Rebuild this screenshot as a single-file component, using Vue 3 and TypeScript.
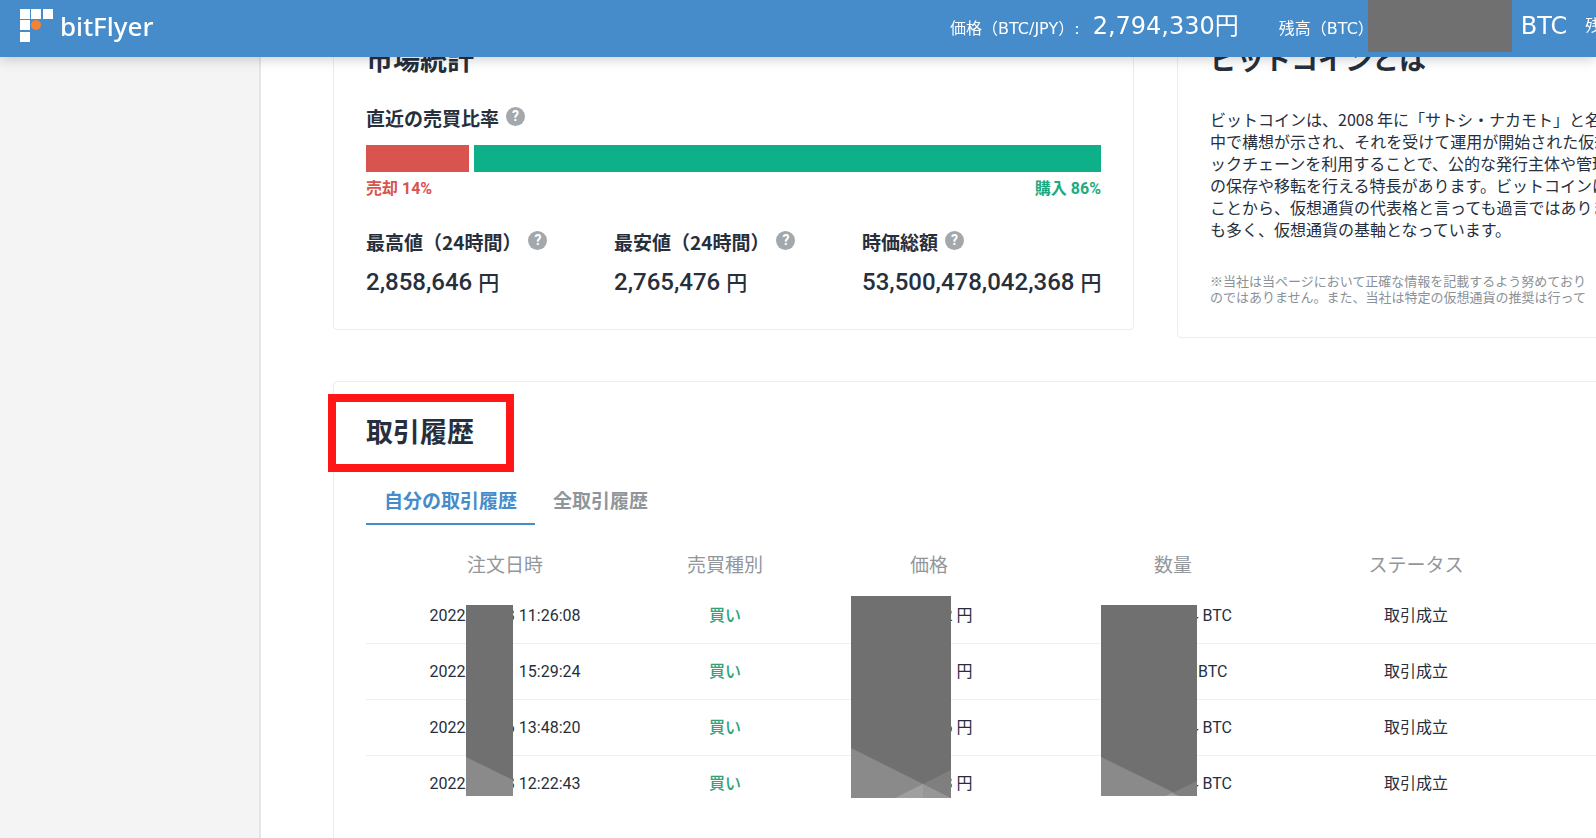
<script setup lang="ts">
import { ref } from 'vue'

interface Shape { points: string; fill: string }
interface Mask { name: string; width: number; height: number; shapes: Shape[] }
interface Trade { time: string; price: string; amount: string; short?: boolean }

const sellRate = 14
const tabs = ['自分の取引履歴', '全取引履歴']
const activeTab = ref(0)

const stats = [
  { label: '最高値（24時間）', value: '2,858,646' },
  { label: '最安値（24時間）', value: '2,765,476' },
  { label: '時価総額', value: '53,500,478,042,368' },
]

const about = [
  'ビットコインは、2008 年に「サトシ・ナカモト」と名',
  '中で構想が示され、それを受けて運用が開始された仮想',
  'ックチェーンを利用することで、公的な発行主体や管理',
  'の保存や移転を行える特長があります。ビットコインは',
  'ことから、仮想通貨の代表格と言っても過言ではありま',
  'も多く、仮想通貨の基軸となっています。',
]
const notes = [
  '※当社は当ページにおいて正確な情報を記載するよう努めており',
  'のではありません。また、当社は特定の仮想通貨の推奨は行って',
]

const trades: Trade[] = [
  { time: '8 11:26:08', price: '2 円', amount: '4 BTC' },
  { time: '15:29:24', price: '円', amount: 'BTC', short: true },
  { time: '6 13:48:20', price: '6 円', amount: '4 BTC' },
  { time: '8 12:22:43', price: '8 円', amount: '4 BTC' },
]

const dateMask: Mask = {
  name: 'date', width: 47, height: 191,
  shapes: [{ points: '0,152 47,175 47,191 0,191', fill: '#8a8a8a' }],
}
const priceMask: Mask = {
  name: 'price', width: 100, height: 202,
  shapes: [
    { points: '0,152 100,202 0,202', fill: '#8a8a8a' },
    { points: '100,174 72,188 100,202', fill: '#7f7f7f' },
    { points: '72,188 44,202 72,202', fill: '#9f9f9f' },
    { points: '72,188 72,202 100,202', fill: '#979797' },
  ],
}
const amountMask: Mask = {
  name: 'amount', width: 96, height: 191,
  shapes: [
    { points: '0,152 80,191 0,191', fill: '#8a8a8a' },
    { points: '96,176 71,188 78,191 96,191', fill: '#808080' },
    { points: '71,188 64,191 78,191', fill: '#a2a2a2' },
  ],
}
</script>

<template>
  <div class="page">
    <header class="topbar">
      <a class="brand" href="#">
        <svg width="33" height="33" viewBox="0 0 33 33" aria-hidden="true">
          <g fill="#fff">
            <rect width="10" height="10" /><rect x="11" width="10" height="10" /><rect x="23" width="10" height="10" />
            <rect y="11" width="10" height="10" /><rect y="23" width="10" height="10" />
          </g>
          <circle cx="16" cy="16" r="5" fill="#f58233" />
        </svg>
        <span>bitFlyer</span>
      </a>
      <div class="tickers">
        <p class="ticker">価格（BTC/JPY）: <strong class="rate">2,794,330円</strong></p>
        <p class="ticker">残高（BTC）<span class="hidden-balance"></span><strong>BTC</strong></p>
        <p class="ticker">残高</p>
      </div>
    </header>

    <div class="layout">
      <aside class="sidebar"></aside>
      <main class="content">
        <div class="cards">
          <section class="card market">
            <h2>市場統計</h2>
            <h3 class="label ratio-label">直近の売買比率
              <button class="help" type="button" aria-label="ヘルプ">?</button>
            </h3>
            <div class="bar">
              <div class="sell" :style="{ width: sellRate + '%' }"></div>
              <div class="buy"></div>
            </div>
            <div class="rates">
              <span class="sell-text">売却 14%</span>
              <span class="buy-text">購入 86%</span>
            </div>
            <div class="stats">
              <div v-for="s in stats" :key="s.label">
                <h3 class="label">{{ s.label }}
                  <button class="help" type="button" aria-label="ヘルプ">?</button>
                </h3>
                <p class="value">{{ s.value }} <span>円</span></p>
              </div>
            </div>
          </section>

          <section class="card about">
            <h2>ビットコインとは</h2>
            <p class="description"><span v-for="line in about" :key="line">{{ line }}</span></p>
            <p class="note"><span v-for="line in notes" :key="line">{{ line }}</span></p>
          </section>
        </div>

        <section class="card history">
          <h2><span class="highlighted">取引履歴</span></h2>
          <div class="tabs" role="tablist">
            <button
              v-for="(tab, i) in tabs" :key="tab" type="button" role="tab"
              :aria-selected="activeTab === i" :class="{ active: activeTab === i }"
              @click="activeTab = i"
            >{{ tab }}</button>
          </div>
          <table>
            <colgroup>
              <col class="c-date"><col class="c-side"><col class="c-price"><col class="c-amount"><col class="c-status"><col>
            </colgroup>
            <thead>
              <tr><th>注文日時</th><th>売買種別</th><th>価格</th><th>数量</th><th>ステータス</th><td></td></tr>
            </thead>
            <tbody>
              <tr v-for="(t, i) in trades" :key="t.time">
                <td>
                  <span class="date"><span>2022/</span><span>{{ t.time }}</span></span>
                  <svg v-if="i === 0" class="mask date-mask" :width="dateMask.width" :height="dateMask.height">
                    <rect width="100%" height="100%" fill="#707070" />
                    <polygon v-for="s in dateMask.shapes" :key="s.points" :points="s.points" :fill="s.fill" />
                  </svg>
                </td>
                <td class="side">買い</td>
                <td>
                  <span class="price">{{ t.price }}</span>
                  <svg v-if="i === 0" class="mask price-mask" :width="priceMask.width" :height="priceMask.height">
                    <rect width="100%" height="100%" fill="#707070" />
                    <polygon v-for="s in priceMask.shapes" :key="s.points" :points="s.points" :fill="s.fill" />
                  </svg>
                </td>
                <td>
                  <span class="amount" :class="{ short: t.short }">{{ t.amount }}</span>
                  <svg v-if="i === 0" class="mask amount-mask" :width="amountMask.width" :height="amountMask.height">
                    <rect width="100%" height="100%" fill="#707070" />
                    <polygon v-for="s in amountMask.shapes" :key="s.points" :points="s.points" :fill="s.fill" />
                  </svg>
                </td>
                <td>取引成立</td>
                <td></td>
              </tr>
            </tbody>
          </table>
        </section>
      </main>
    </div>
  </div>
</template>

<style>
body { margin: 0; background: #fff; }
</style>

<style scoped>
* { box-sizing: border-box; }
h2, h3, p { margin: 0; }
button { border: 0; padding: 0; background: none; font: inherit; cursor: pointer; }

.page {
  height: 100vh;
  overflow: hidden;
  color: #272f3d;
  font-family: Roboto, "Noto Sans CJK JP", sans-serif;
}
.topbar {
  position: fixed;
  inset: 0 0 auto;
  z-index: 10;
  height: 57px;
  display: flex;
  justify-content: space-between;
  background: #468bca;
  color: #fff;
  box-shadow: 0 2px 12px rgba(0, 0, 0, 0.2);
}
.brand {
  display: flex;
  align-items: center;
  gap: 7px;
  padding: 0 0 6px 20px;
  color: #fff;
  text-decoration: none;
  font: 500 26px/36px "Noto Sans", sans-serif;
}
.tickers {
  display: flex;
  width: 646px;
  overflow: hidden;
  font: 16px/52px "DejaVu Sans", "Noto Sans CJK JP", sans-serif;
  white-space: nowrap;
}
.ticker {
  display: flex;
  align-items: baseline;
  flex: none;
  margin-right: 40px;
  white-space: pre;
}
.ticker:nth-child(2) { margin-right: 18px; }
.ticker strong { font-size: 24px; font-weight: 400; }
.ticker .rate { margin-left: 8px; }
.hidden-balance {
  align-self: flex-start;
  width: 144px;
  height: 52px;
  margin: 0 9px 0 -6px;
  background: #707070;
}

.layout { display: flex; min-height: 100vh; }
.sidebar {
  flex: none;
  width: 261px;
  background: #f4f4f4;
  border-right: 2px solid #e6e6e8;
}
.content {
  flex: 1 0 1400px;
  display: flex;
  flex-direction: column;
  padding: 9px 0 0 72px;
}
.cards { display: flex; align-items: flex-start; gap: 43px; }
.card {
  border: 1px solid #ededef;
  border-radius: 4px;
  padding: 33px 32px 28px;
  background: #fff;
}
.market { flex: none; width: 801px; }
.about { flex: 1; padding-bottom: 31px; white-space: nowrap; }
h2 { font-size: 27px; line-height: 36px; font-weight: 700; }

.label {
  display: flex;
  align-items: center;
  gap: 7px;
  font: 700 19px/28px "Noto Sans CJK JP", sans-serif;
}
.ratio-label { margin-top: 25px; }
.help {
  width: 19px;
  height: 19px;
  margin-bottom: 4px;
  border-radius: 50%;
  background: #a3a8ad;
  color: #fff;
  font: 700 14px/19px Roboto, sans-serif;
  text-align: center;
}
.bar { display: flex; gap: 5px; height: 27px; margin-top: 13px; }
.sell { background: #d9534f; }
.buy { flex: 1; background: #0db088; }
.rates {
  display: flex;
  justify-content: space-between;
  margin-top: 5px;
  font-size: 16px;
  line-height: 24px;
  font-weight: 700;
}
.sell-text { color: #d9534f; }
.buy-text { color: #1ea97f; }
.stats { display: flex; margin-top: 27px; }
.stats > div { flex: none; width: 248px; }
.value { margin-top: 8px; font-size: 24px; line-height: 36px; font-weight: 500; white-space: nowrap; }
.value span { font-size: 21px; }

.description, .note { font-family: "Noto Sans CJK JP", sans-serif; }
.description { margin-top: 29px; font-size: 16px; line-height: 22px; }
.note { margin-top: 33px; padding-bottom: 1px; color: #8a9197; font-size: 13px; line-height: 16px; }
.description span, .note span { display: block; }

.history { flex: 1; margin-top: 43px; }
.highlighted { position: relative; }
.highlighted::after {
  content: "";
  position: absolute;
  inset: -23px -40px -23px -38px;
  border: 8px solid #ff1616;
}
.tabs { display: flex; margin-top: 30px; }
.tabs button {
  padding: 7px 18px;
  border-bottom: 2px solid transparent;
  color: #8f969b;
  font-size: 19px;
  line-height: 28px;
  font-weight: 700;
}
.tabs .active { color: #468bca; border-color: #468bca; }

table { width: 100%; margin-top: 17px; border-collapse: separate; border-spacing: 0; table-layout: fixed; }
.c-date { width: 278px; }
.c-side { width: 162px; }
.c-price { width: 246px; }
.c-amount { width: 242px; }
.c-status { width: 244px; }
th { height: 46px; padding: 0 0 3px; color: #92979b; font-size: 19px; font-weight: 400; }
tbody td {
  position: relative;
  height: 56px;
  padding: 0;
  border-bottom: 1px solid #eeeff0;
  font-size: 16px;
  line-height: 24px;
  text-align: center;
}
tbody tr:last-child td { border-bottom: 0; }
tbody .side { color: #2fa37c; font-weight: 500; }
.date { display: inline-flex; justify-content: space-between; width: 151px; }
.price, .amount { display: inline-block; text-align: right; }
.price { width: 87px; }
.amount { width: 118px; }
.amount.short { width: 109px; }
.mask { position: absolute; z-index: 1; }
.date-mask { left: 100px; top: 17px; }
.price-mask { left: 45px; top: 8px; }
.amount-mask { left: 49px; top: 17px; }
</style>
